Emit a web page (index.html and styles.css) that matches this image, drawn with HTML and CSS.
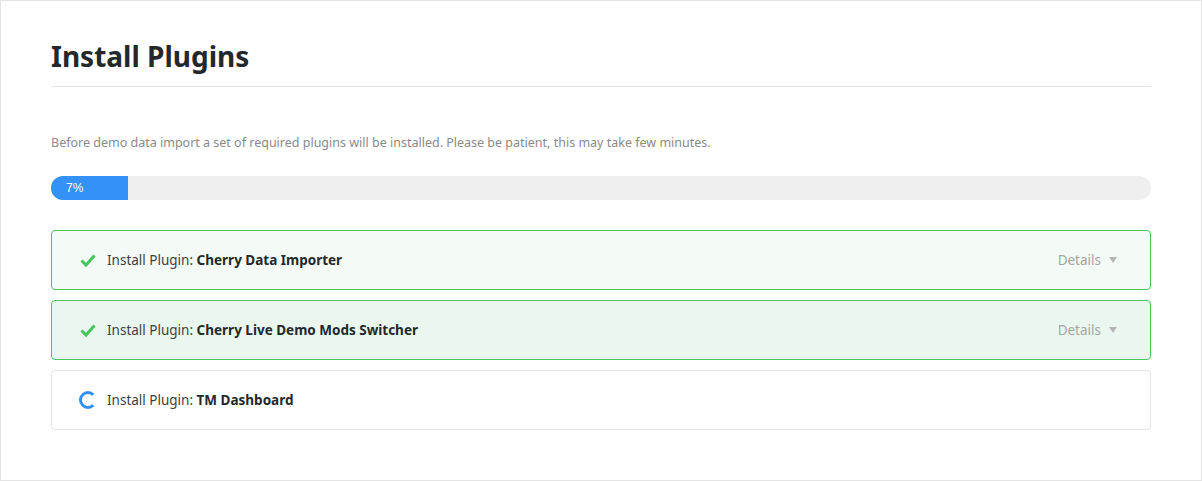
FILE: index.html
```html
<!DOCTYPE html>
<html lang="en">

<head>
    <meta charset="UTF-8">
    <meta name="viewport" content="width=device-width, initial-scale=1.0">
    <title>Install Plugins</title>
    <link rel="stylesheet" href="styles.css">
</head>

<body>
    <div class="wizard">
        <h1 class="wizard-title">Install Plugins</h1>
        <p class="wizard-desc">Before demo data import a set of required plugins will be installed. Please be patient, this may take few minutes.</p>

        <div class="progress">
            <div class="progress-bar" style="width: 7%">7%</div>
        </div>

        <div class="plugins">
            <div class="plugin done">
                <svg class="plugin-icon" width="16" height="16" viewBox="0 0 16 16">
                    <path d="M1.5 8.5 L6 13 L14.5 3.5" fill="none" stroke="#46c35f" stroke-width="3" stroke-linejoin="miter"/>
                </svg>
                <span class="plugin-name">Install Plugin: <strong>Cherry Data Importer</strong></span>
                <a href="#" class="plugin-details">Details <span class="caret"></span></a>
            </div>
            <div class="plugin done active">
                <svg class="plugin-icon" width="16" height="16" viewBox="0 0 16 16">
                    <path d="M1.5 8.5 L6 13 L14.5 3.5" fill="none" stroke="#46c35f" stroke-width="3" stroke-linejoin="miter"/>
                </svg>
                <span class="plugin-name">Install Plugin: <strong>Cherry Live Demo Mods Switcher</strong></span>
                <a href="#" class="plugin-details">Details <span class="caret"></span></a>
            </div>
            <div class="plugin">
                <svg class="plugin-icon" width="16" height="16" viewBox="0 0 16 16">
                    <path d="M13.3 2.7 A7.5 7.5 0 1 0 13.3 13.3" fill="none" stroke="#3391f8" stroke-width="3"/>
                </svg>
                <span class="plugin-name">Install Plugin: <strong>TM Dashboard</strong></span>
            </div>
        </div>
    </div>
</body>

</html>
```

FILE: styles.css
```css
html,
body {
    margin: 0;
    padding: 0;
    background-color: #ffffff;
}

body {
    font-family: "Noto Sans", Arial, sans-serif;
    color: #23282d;
}

.wizard {
    width: 1202px;
    height: 481px;
    box-sizing: border-box;
    border: 1px solid #e4e4e4;
    padding: 36px 50px 0;
}

.wizard-title {
    font-size: 28px;
    font-weight: 700;
    margin: 0;
    padding-bottom: 11px;
    border-bottom: 1px solid #e4e4e4;
    line-height: 38px;
}

.wizard-desc {
    font-size: 12.5px;
    color: #8a8a8a;
    margin: 47px 0 24px;
    line-height: 18px;
}

.progress {
    height: 24px;
    border-radius: 12px;
    background-color: #efefef;
    overflow: hidden;
    display: flex;
}

.progress-bar {
    background-color: #3391f8;
    color: #ffffff;
    font-family: "Liberation Sans", Arial, sans-serif;
    font-size: 12px;
    line-height: 24px;
    padding-left: 15px;
    box-sizing: border-box;
}

.plugins {
    margin-top: 30px;
    display: flex;
    flex-direction: column;
    gap: 10px;
}

.plugin {
    display: flex;
    align-items: center;
    height: 60px;
    box-sizing: border-box;
    border: 1px solid #e4e4e4;
    border-radius: 4px;
    padding: 0 33px 0 28px;
    font-size: 13.5px;
}

.plugin.done {
    border-color: #4cc461;
    background-color: #f4fbf6;
}

.plugin.done.active {
    background-color: #eaf7ee;
}

.plugin-icon {
    margin-right: 11px;
    overflow: visible;
}

.plugin-name {
    flex-grow: 1;
    color: #3c3f44;
}

.plugin-name strong {
    color: #23282d;
}

.plugin-details {
    color: #a5a5a5;
    text-decoration: none;
    display: flex;
    align-items: center;
}

.caret {
    display: inline-block;
    width: 0;
    height: 0;
    margin-left: 8px;
    border-left: 4px solid transparent;
    border-right: 4px solid transparent;
    border-top: 6px solid #b5b5b5;
}
```
